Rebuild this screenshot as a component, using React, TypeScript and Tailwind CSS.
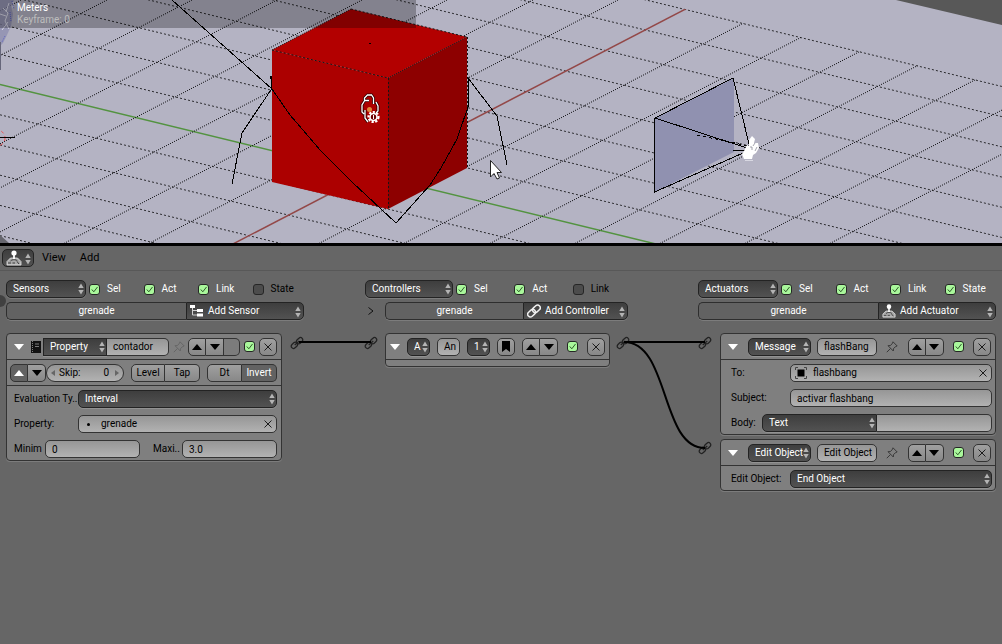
import React from "react";
import clsx from "clsx";

const MENU =
  "h-[18px] border border-[#232323] bg-linear-to-b from-[#3e3e3e] to-[#525252] text-white";
const FIELD =
  "h-[18px] min-w-0 border border-[#333333] bg-linear-to-b from-[#969696] to-[#b2b2b2] text-black";
const BUTTON =
  "flex h-[18px] shrink-0 items-center justify-center border border-[#333333] bg-linear-to-b from-[#a0a0a0] to-[#888888] text-black";
const SHADOW = "shadow-[0_1px_0_rgba(255,255,255,0.15)]";

// Grid lines of the 3D view floor
const FLOOR_SLOPE = 0.243;
const crossLines = Array.from({ length: 14 }, (_, i) => i - 8);
const depthLines = Array.from({ length: 18 }, (_, i) => i - 10);

const Arrows = () => (
  <svg
    viewBox="0 0 6 12"
    className="pointer-events-none absolute top-[3px] right-0.5 h-3 w-1.5 fill-[#b4b4b4]"
  >
    <path d="M3 0.5L5.7 5H0.3zM3 11.5L5.7 7H0.3z" />
  </svg>
);

const LinkIcon = ({ x, y }: { x: number; y: number }) => (
  <g
    transform={`translate(${x} ${y}) rotate(-42)`}
    fill="none"
    stroke="#222222"
    strokeWidth="1.3"
  >
    <rect x="-7" y="-2.3" width="7" height="4.6" rx="2.3" />
    <rect x="0" y="-2.3" width="7" height="4.6" rx="2.3" />
    <path d="M-3 0H3" />
  </g>
);

const JoystickIcon = ({ className }: { className?: string }) => (
  <svg
    viewBox="0 0 16 16"
    className={clsx("shrink-0", className ?? "h-4 w-4")}
  >
    <path
      d="M1 11.500l3.500-3.500h7l3.500 3.500v3.500H1z"
      fill="#a8a8a8"
      stroke="#e8e8e8"
      strokeWidth="0.8"
    />
    <path d="M8 4v6" stroke="#ffffff" strokeWidth="1.8" />
    <circle cx="8" cy="3" r="2.6" fill="#ffffff" />
    <path
      d="M4.500 11c1-1.800 6-1.800 7 0M2 13h3M6.500 13h2.500M11 11.500l2 2.500"
      stroke="#3c3c3c"
      fill="none"
    />
  </svg>
);

const SensorIcon = () => (
  <svg viewBox="0 0 14 12" className="h-3 w-3.5 shrink-0">
    <path d="M2.5 3v7H7M2.5 5.5H7" stroke="#d0d0d0" fill="none" />
    <path d="M0 0h5v3H0zM7 4h6v3H7zM7 8.500h6v3H7z" fill="#ffffff" />
  </svg>
);

const ChainIcon = () => (
  <svg
    viewBox="0 0 14 14"
    className="h-3.5 w-3.5 shrink-0"
    fill="none"
    stroke="#f0f0f0"
    strokeWidth="1.5"
  >
    <g transform="rotate(-42 7 7)">
      <rect x="-0.5" y="4.300" width="8.500" height="5.400" rx="2.700" />
      <rect x="6" y="4.300" width="8.500" height="5.400" rx="2.700" />
    </g>
  </svg>
);

const PinIcon = ({ faded }: { faded?: boolean }) => (
  <svg
    viewBox="0 0 12 12"
    className={clsx("h-3 w-3 shrink-0", faded && "opacity-35")}
    fill="none"
    stroke="#3a3a3a"
  >
    <path d="M7 0.800L11.200 5 9.800 5.500 7.500 7.500 7.300 10 2 4.700 4.500 4.500 6.500 2.200zM4.600 7.400L0.800 11.200" />
  </svg>
);

const Triangle = ({ up }: { up?: boolean }) => (
  <svg viewBox="0 0 10 6" className="h-1.5 w-2.5 fill-current">
    <path d={up ? "M5 0L10 6H0z" : "M0 0H10L5 6z"} />
  </svg>
);

interface MenuProps {
  label: string;
  value: string;
  className?: string;
  selectClassName?: string;
}

const Menu: React.FC<MenuProps> = ({
  label,
  value,
  className,
  selectClassName,
}) => (
  <div className={clsx("relative shrink-0", className)}>
    <select
      aria-label={label}
      className={clsx(
        "block w-full appearance-none",
        MENU,
        SHADOW,
        selectClassName ?? "rounded-[5px] pl-1.5",
      )}
    >
      <option>{value}</option>
    </select>
    <Arrows />
  </div>
);

const Check = ({
  label,
  hidden,
  checked = true,
}: {
  label: string;
  hidden?: boolean;
  checked?: boolean;
}) => (
  <label
    className={clsx(
      "relative flex items-center gap-[7px]",
      !hidden && "flex-1",
      checked ? "text-white" : "text-black",
    )}
  >
    <input
      type="checkbox"
      defaultChecked={checked}
      aria-label={hidden ? label : undefined}
      className="peer h-[11px] w-[11px] shrink-0 appearance-none rounded-[3px] border border-[#262626] bg-[#4c4c4c] checked:bg-[#a9f79b]"
    />
    <svg
      viewBox="0 0 11 11"
      className="pointer-events-none absolute left-0 hidden h-[11px] w-[11px] peer-checked:block"
    >
      <path
        d="M2.800 5.500L4.800 7.800 8.500 3"
        fill="none"
        stroke="#2f5a2a"
        strokeWidth="1"
      />
    </svg>
    {!hidden && label}
  </label>
);

const Expand = ({ label }: { label: string }) => (
  <button aria-label={label} className="shrink-0 text-white">
    <Triangle />
  </button>
);

const MoveButtons = ({ blank }: { blank?: boolean }) => (
  <div className="flex shrink-0">
    <button
      aria-label="Move up"
      className={clsx(BUTTON, "w-[18px] rounded-l-[5px]")}
    >
      <Triangle up />
    </button>
    <button
      aria-label="Move down"
      className={clsx(
        BUTTON,
        "w-[18px] border-l-0",
        !blank && "rounded-r-[5px]",
      )}
    >
      <Triangle />
    </button>
    {blank && (
      <button
        aria-label="State"
        className="h-[18px] w-4 rounded-r-[5px] border border-l-0 border-[#333333] bg-[#7c7c7c]"
      />
    )}
  </div>
);

const Cross = () => (
  <svg
    viewBox="0 0 8 8"
    className="h-2 w-2 shrink-0"
    stroke="#1c1c1c"
    fill="none"
  >
    <path d="M0.500 0.500L7.500 7.500M7.500 0.500L0.500 7.500" />
  </svg>
);

const CloseButton = () => (
  <button
    aria-label="Delete"
    className={clsx(BUTTON, "w-[18px] rounded-[5px]")}
  >
    <Cross />
  </button>
);

const Card = ({ children }: { children: React.ReactNode }) => (
  <section
    className={clsx(
      "rounded-[4px] border border-[#333333] bg-[#7f7f7f]",
      SHADOW,
    )}
  >
    {children}
  </section>
);

const Viewport = () => (
  <div className="relative h-[246px] overflow-hidden border-b-3 border-black bg-[#b4b3c3]">
    <svg
      viewBox="0 0 1002 243"
      preserveAspectRatio="xMinYMin slice"
      className="block h-full w-full"
    >
      <clipPath id="floor">
        <path d="M0 0H640L1002 88V243H0z" />
      </clipPath>
      <clipPath id="depth">
        <path d="M0 0H647L1002 86V243H0z" />
      </clipPath>
      <path d="M896 0H1002V25z" fill="#585858" />
      <g>
        {crossLines.map((n) => {
          const y = 84.6 + n * 30.2;
          return (
            <line
              key={n}
              x1="0"
              y1={y}
              x2="1002"
              y2={y + 1002 * FLOOR_SLOPE}
              stroke={n === 0 ? "#539340" : "#2e2e32"}
              strokeWidth={n === 0 ? 1.5 : 1}
              strokeDasharray={n === 0 ? undefined : "2.058 2.058"}
            />
          );
        })}
      </g>
      <g clipPath="url(#depth)">
        {depthLines.map((n) => {
          const x = Math.round(686 + n * 85.2);
          return (
            <line
              key={n}
              x1={x + 385}
              y1="-191"
              x2={x - 482}
              y2="259"
              stroke={n === 0 ? "#934848" : "#1c1c20"}
              strokeWidth={n === 0 ? 1.5 : 1}
              strokeDasharray={n === 0 ? undefined : "1.1266 1.1267"}
            />
          );
        })}
      </g>

      {/* Cube */}
      <path d="M272 50L388 78V209L272 182z" fill="#ac0000" />
      <path d="M272 50L351 9L467 37L388 78z" fill="#b30000" />
      <path d="M388 78L467 37V168L388 209z" fill="#8d0000" />
      <g fill="none" stroke="#161616" strokeDasharray="2 2">
        <path d="M272 50L388 78M388.500 78V209M351 9L467 37M467.500 37V168" />
        <path d="M388 78L467 37M351 9L272 50" strokeDasharray="1 1.250" />
      </g>
      <path d="M369 43.500h2" stroke="#000000" />

      {/* Lamp outline */}
      <g fill="none" stroke="#000000" shapeRendering="crispEdges">
        <path d="M172 0L272 89L290 115L321 151L352 182L396 223L430 185L441 168L457 139L469 104L468 78L497 116L507 165" />
        <path d="M270.500 79V76.500H271.500V89L242 133L232 184" />
      </g>

      {/* Camera */}
      <path d="M655 118L734 78V152L655 192z" fill="#9091b0" />
      <g fill="none" stroke="#000000" shapeRendering="crispEdges">
        <path d="M750 149L655 118L733 78L750 148M654.500 118V192L750 150M733 150.500H749" />
        <path d="M697 135L735 143L752 147" strokeDasharray="3 3" />
      </g>
      <path
        d="M744 151l3-6 2 1 0-6 3-4 3 3-1 4 4 0 1 5-3 5-3 2-1 4h-8l-2-5z"
        fill="#ffffff"
      />
      <path d="M745 160.500h8" stroke="#d8d8e2" />
      <path
        d="M750 147h2v3M755 143l-2 3M757 147l-2 4"
        fill="none"
        stroke="#8b8b98"
        strokeWidth="0.8"
      />

      {/* Logic marker */}
      <g fill="none">
        <path
          d="M365 100l-3 5v7l2 2M364.500 101v-3l3-3h4l2 3v6M365 100.500h4M365 110v8l3 4M376 102l2 4v5l-2 2"
          stroke="#310000"
          strokeWidth="3"
        />
        <path
          d="M365 100l-3 5v7l2 2M364.500 101v-3l3-3h4l2 3v6M365 100.500h4M365 110v8l3 4M376 102l2 4v5l-2 2"
          stroke="#ffffff"
          strokeWidth="1.300"
        />
        <circle
          cx="373.500"
          cy="117"
          r="5"
          stroke="#ffffff"
          strokeWidth="2.200"
          strokeDasharray="2.200 1.500"
        />
        <circle
          cx="373.500"
          cy="117"
          r="3.500"
          fill="#6a0000"
          stroke="#ffffff"
          strokeWidth="1.600"
        />
        <path d="M373.500 115v4" stroke="#ffffff" />
      </g>
      <circle cx="369.500" cy="109.500" r="2.500" fill="#e08a3c" />

      {/* Left edge objects */}
      <path
        d="M0 0h14l-3 6 2 8-2 12-4 9-4 8-3 3z"
        fill="#8f8fb0"
        fillOpacity="0.8"
      />
      <path
        d="M3 8l5 5-3 8 4 8M0 14l6 2M2 30l6-8M9 3l-3 9M13 2v6"
        fill="none"
        stroke="#d8d8e8"
      />
      <path d="M12 1l2 8M10 12l1 10M5 36l-3 6" stroke="#5c62c4" strokeDasharray="1 1" />
      <path d="M0.500 42V70" stroke="#66667a" />
      <circle
        cx="-3"
        cy="138"
        r="8"
        fill="none"
        stroke="#ee4a4a"
        strokeDasharray="3 3"
      />
      <path d="M0 137.500H15" stroke="#000000" />
      <path d="M0 235L9 243H0z" fill="#66666e" />

      <path d="M0 0H416V28H0z" fill="#000000" fillOpacity="0.27" />
      <path
        d="M490.500 160.500V177L494 173.500L497 179L499.500 178L497 172.500H501.500z"
        fill="#ffffff"
        stroke="#222222"
      />
    </svg>
    <div className="absolute top-0.5 left-[17px] leading-3 text-white">
      <p>Meters</p>
      <p className="text-[#bdbdbd]">Keyframe: 0</p>
    </div>
  </div>
);

interface ColumnHeaderProps {
  title: string;
  addLabel: string;
  icon: React.ReactNode;
  checks: { label: string; checked: boolean }[];
  wide?: boolean;
}

const ColumnHeader: React.FC<ColumnHeaderProps> = ({
  title,
  addLabel,
  icon,
  checks,
  wide,
}) => (
  <div className="flex flex-col gap-1">
    <div className="flex items-center gap-[3px]">
      <Menu label={title} value={title} className={wide ? "w-[88px]" : "w-20"} />
      {checks.map((check) => (
        <Check key={check.label} {...check} />
      ))}
    </div>
    <div className="flex">
      {wide && (
        <button aria-label="Expand" className="w-5 shrink-0 pl-[3px]">
          <svg
            viewBox="0 0 6 8"
            className="h-2 w-1.5"
            fill="none"
            stroke="#111111"
          >
            <path d="M0.500 0.500L5 4L0.500 7.500" />
          </svg>
        </button>
      )}
      <button
        className={clsx(
          "h-[18px] min-w-0 flex-1 rounded-l-[5px] border border-r-0 border-[#2e2e2e] bg-[#626262] text-white",
          SHADOW,
        )}
      >
        grenade
      </button>
      <button
        aria-haspopup="menu"
        className={clsx(
          "relative flex shrink-0 items-center gap-1 rounded-r-[5px] pl-[3px]",
          wide ? "w-[105px]" : "w-[118px]",
          MENU,
          SHADOW,
        )}
      >
        {icon}
        {addLabel}
        <Arrows />
      </button>
    </div>
  </div>
);

const SensorCard = () => (
  <Card>
    <div className="flex h-[26px] items-center border-b border-[#333333] pr-1 pl-[7px]">
      <Expand label="Collapse sensor" />
      <svg viewBox="0 0 12 14" className="mr-px ml-1.5 h-3.5 w-3 shrink-0">
        <path d="M1 1h10v12H1z" fill="#111111" />
        <path d="M2.500 1v12" stroke="#7f7f7f" strokeDasharray="1 1" />
        <path d="M5 4h4M5 6.500h4" stroke="#7a7a7a" />
      </svg>
      <Menu
        label="Sensor type"
        value="Property"
        className="w-16"
        selectClassName="pl-1.5"
      />
      <input
        aria-label="Sensor name"
        defaultValue="contador"
        className={clsx(FIELD, "flex-1 rounded-r-[5px] border-l-0 pl-1.5")}
      />
      <span className="mr-[3px] ml-1 flex">
        <PinIcon faded />
      </span>
      <MoveButtons blank />
      <span className="mx-1 flex">
        <Check label="Active" hidden />
      </span>
      <CloseButton />
    </div>
    <div className="flex h-[26px] items-center border-b border-[#333333] pr-1 pl-[3px]">
      <button
        aria-label="Positive pulse"
        className="flex h-[18px] w-[18px] items-center justify-center rounded-l-[5px] border border-[#333333] bg-[#626262] text-white"
      >
        <Triangle up />
      </button>
      <button
        aria-label="Negative pulse"
        className={clsx(BUTTON, "w-[18px] rounded-r-[5px] border-l-0")}
      >
        <Triangle />
      </button>
      <label
        className={clsx(
          FIELD,
          "flex flex-1 items-center justify-between rounded-full px-1",
        )}
      >
        <span className="flex items-center gap-1">
          <svg viewBox="0 0 4 6" className="h-1.5 w-1 fill-[#666666]">
            <path d="M4 0V6L0 3z" />
          </svg>
          Skip:
        </span>
        <span className="flex items-center gap-1.5">
          <input
            defaultValue="0"
            className="w-4 bg-transparent text-right outline-none"
          />
          <svg viewBox="0 0 4 6" className="h-1.5 w-1 fill-[#666666]">
            <path d="M0 0V6L4 3z" />
          </svg>
        </span>
      </label>
      <div className="mx-[7px] flex">
        <button className={clsx(BUTTON, "w-[34px] rounded-l-[5px]")}>
          Level
        </button>
        <button className={clsx(BUTTON, "w-[35px] rounded-r-[5px] border-l-0")}>
          Tap
        </button>
      </div>
      <button className={clsx(BUTTON, "w-[35px] rounded-l-[5px]")}>Dt</button>
      <button className="h-[18px] w-[35px] rounded-r-[5px] border border-l-0 border-[#333333] bg-[#626262] text-white">
        Invert
      </button>
    </div>
    <div className="flex flex-col gap-[7px] pt-1 pr-1 pb-0.5 pl-[7px]">
      <div className="flex items-center">
        <span className="w-16 shrink-0 whitespace-nowrap">
          Evaluation Ty..
        </span>
        <Menu label="Evaluation Type" value="Interval" className="flex-1" />
      </div>
      <div className="flex items-center">
        <label htmlFor="property" className="w-16 shrink-0">
          Property:
        </label>
        <div
          className={clsx(
            FIELD,
            "flex flex-1 items-center rounded-[5px] pr-1 pl-2",
          )}
        >
          <span className="h-[3px] w-[3px] rounded-full bg-black" />
          <input
            id="property"
            defaultValue="grenade"
            className="ml-[11px] min-w-0 flex-1 bg-transparent outline-none"
          />
          <Cross />
        </div>
      </div>
      <div className="flex items-center justify-between">
        <label className="flex items-center">
          <span className="w-[31px]">Minim</span>
          <input
            defaultValue="0"
            className={clsx(FIELD, "w-[95px] rounded-[5px] pl-1.5")}
          />
        </label>
        <label className="flex items-center">
          <span className="w-[29px]">Maxi..</span>
          <input
            defaultValue="3.0"
            className={clsx(FIELD, "w-[95px] rounded-[5px] pl-1.5")}
          />
        </label>
      </div>
    </div>
  </Card>
);

const ControllerCard = () => (
  <Card>
    <div className="flex h-[26px] items-center justify-between border-b border-[#333333] px-1">
      <div className="flex items-center gap-[7px]">
        <Expand label="Collapse controller" />
        <Menu label="Controller type" value="A" className="w-[23px]" />
        <input
          aria-label="Controller name"
          defaultValue="An"
          className={clsx(FIELD, "w-[23px] rounded-[5px] pl-1.5")}
        />
        <Menu label="State" value="1" className="w-[23px]" />
        <button
          aria-label="Priority"
          className={clsx(BUTTON, "w-[18px] rounded-[5px]")}
        >
          <svg viewBox="0 0 8 11" className="h-[11px] w-2">
            <path d="M0 0H8V11L4 8L0 11z" />
          </svg>
        </button>
        <MoveButtons />
      </div>
      <Check label="Active" hidden />
      <CloseButton />
    </div>
    <div className="h-1.5" />
  </Card>
);

const ActuatorCard = ({
  type,
  name,
  children,
}: {
  type: string;
  name: string;
  children: React.ReactNode;
}) => (
  <Card>
    <div className="flex h-[26px] items-center justify-between border-b border-[#333333] pr-1 pl-[7px]">
      <div className="flex items-center">
        <Expand label="Collapse actuator" />
        <Menu
          label="Actuator type"
          value={type}
          className="mr-1.5 ml-2.5 w-[63px]"
        />
        <input
          aria-label="Actuator name"
          defaultValue={name}
          className={clsx(FIELD, "w-[60px] rounded-[5px] pl-1.5")}
        />
      </div>
      <PinIcon />
      <MoveButtons />
      <Check label="Active" hidden />
      <CloseButton />
    </div>
    <div className="flex flex-col gap-[7px] pt-1 pr-[3px] pb-0.5 pl-2.5">
      {children}
    </div>
  </Card>
);

const App: React.FC = () => {
  return (
    <main className="min-h-screen bg-[#666666] font-[Roboto,sans-serif] text-[10px] leading-3 text-black">
      <Viewport />

      {/* Logic editor header */}
      <header className="flex h-[25px] items-center gap-2 border-b border-[#585858] pl-0.5">
        <button
          aria-label="Editor type"
          aria-haspopup="menu"
          className={clsx(
            "relative flex w-8 items-center rounded-[5px] pl-[3px]",
            MENU,
          )}
        >
          <JoystickIcon />
          <Arrows />
        </button>
        <nav className="flex gap-3.5 text-[11px]">
          <button>View</button>
          <button>Add</button>
        </nav>
      </header>

      <div className="relative px-1.5 pt-[9px]">
        <span className="absolute top-6 -left-1.5 h-3 w-3 rounded-full bg-[#404040]" />
        <div className="grid grid-cols-[minmax(0,298fr)_minmax(0,61fr)_minmax(0,263fr)_minmax(0,70fr)_minmax(0,298fr)]">
          <ColumnHeader
            title="Sensors"
            addLabel="Add Sensor"
            icon={<SensorIcon />}
            checks={[
              { label: "Sel", checked: true },
              { label: "Act", checked: true },
              { label: "Link", checked: true },
              { label: "State", checked: false },
            ]}
          />
          <div className="col-start-3">
            <ColumnHeader
              title="Controllers"
              addLabel="Add Controller"
              icon={<ChainIcon />}
              wide
              checks={[
                { label: "Sel", checked: true },
                { label: "Act", checked: true },
                { label: "Link", checked: false },
              ]}
            />
          </div>
          <div className="col-start-5">
            <ColumnHeader
              title="Actuators"
              addLabel="Add Actuator"
              icon={<JoystickIcon className="h-3.5 w-3.5" />}
              checks={[
                { label: "Sel", checked: true },
                { label: "Act", checked: true },
                { label: "Link", checked: true },
                { label: "State", checked: true },
              ]}
            />
          </div>
        </div>

        <div className="mt-[13px] grid grid-cols-[minmax(0,276fr)_minmax(0,103fr)_minmax(0,225fr)_minmax(0,110fr)_minmax(0,276fr)] items-start">
          <SensorCard />
          <svg viewBox="0 0 103 30" className="w-full">
            <LinkIcon x={15} y={10} />
            <LinkIcon x={89} y={10} />
            <path d="M17 9H89" stroke="#000000" strokeWidth="2" />
          </svg>
          <ControllerCard />
          <svg viewBox="0 0 110 130" className="w-full" fill="none">
            <LinkIcon x={13} y={10} />
            <LinkIcon x={95} y={10} />
            <LinkIcon x={95} y={115} />
            <path
              d="M14 9H95M14 9C60 9 50 115 95 115"
              stroke="#000000"
              strokeWidth="2"
            />
          </svg>
          <div className="flex flex-col gap-1">
            <ActuatorCard type="Message" name="flashBang">
              <div className="flex items-center">
                <label htmlFor="to" className="w-[59px] shrink-0">
                  To:
                </label>
                <div
                  className={clsx(
                    FIELD,
                    "flex flex-1 items-center rounded-[5px] px-1",
                  )}
                >
                  <svg viewBox="0 0 12 12" className="h-3 w-3 shrink-0">
                    <path d="M2.500 2.500h7v7h-7z" fill="#000000" />
                    <path
                      d="M0.500 3V0.500H3M9 0.500h2.500V3M11.500 9v2.500H9M3 11.500H0.500V9"
                      fill="none"
                      stroke="#444444"
                    />
                  </svg>
                  <input
                    id="to"
                    defaultValue="flashbang"
                    className="ml-1.5 min-w-0 flex-1 bg-transparent outline-none"
                  />
                  <Cross />
                </div>
              </div>
              <label className="flex items-center">
                <span className="w-[59px] shrink-0">Subject:</span>
                <input
                  defaultValue="activar flashbang"
                  className={clsx(FIELD, "flex-1 rounded-[5px] pl-1.5")}
                />
              </label>
              <div className="flex items-center">
                <span className="w-[31px] shrink-0">Body:</span>
                <Menu
                  label="Body type"
                  value="Text"
                  className="w-[115px]"
                  selectClassName="rounded-l-[5px] pl-1.5"
                />
                <input
                  aria-label="Body text"
                  className={clsx(
                    FIELD,
                    "flex-1 rounded-r-[5px] border-l-0 pl-1.5",
                  )}
                />
              </div>
            </ActuatorCard>
            <ActuatorCard type="Edit Object" name="Edit Object">
              <div className="flex items-center">
                <span className="w-[59px] shrink-0">Edit Object:</span>
                <Menu
                  label="Edit Object"
                  value="End Object"
                  className="flex-1"
                />
              </div>
            </ActuatorCard>
          </div>
        </div>
      </div>
    </main>
  );
};

export default App;
